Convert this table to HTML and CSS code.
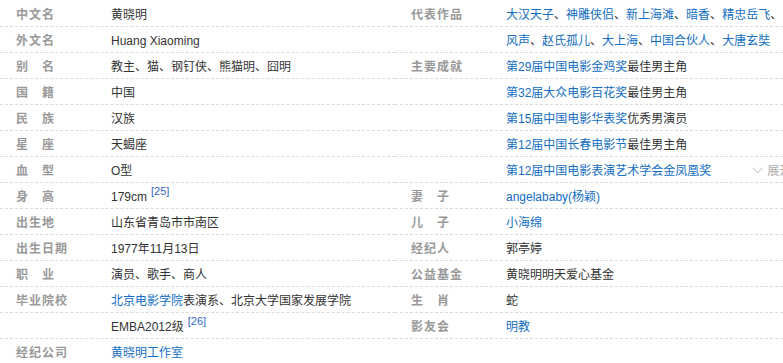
FILE: index.html
```html
<!DOCTYPE html>
<html lang="zh-CN">
<head>
<meta charset="utf-8">
<title>黄晓明 基本信息</title>
<link rel="stylesheet" href="styles.css">
</head>
<body>
<div class="info">
  <div class="col col-left">
    <div class="row"><span class="label">中文名</span><span class="value">黄晓明</span></div>
    <div class="row"><span class="label">外文名</span><span class="value">Huang Xiaoming</span></div>
    <div class="row"><span class="label">别　名</span><span class="value">教主、猫、钢钉侠、熊猫明、囧明</span></div>
    <div class="row"><span class="label">国　籍</span><span class="value">中国</span></div>
    <div class="row"><span class="label">民　族</span><span class="value">汉族</span></div>
    <div class="row"><span class="label">星　座</span><span class="value">天蝎座</span></div>
    <div class="row"><span class="label">血　型</span><span class="value">O型</span></div>
    <div class="row"><span class="label">身　高</span><span class="value">179cm<sup class="ref">[25]</sup></span></div>
    <div class="row"><span class="label">出生地</span><span class="value">山东省青岛市市南区</span></div>
    <div class="row"><span class="label">出生日期</span><span class="value">1977年11月13日</span></div>
    <div class="row"><span class="label">职　业</span><span class="value">演员、歌手、商人</span></div>
    <div class="row"><span class="label">毕业院校</span><span class="value"><a class="link" href="#">北京电影学院</a>表演系、北京大学国家发展学院</span></div>
    <div class="row"><span class="label"></span><span class="value">EMBA2012级<sup class="ref">[26]</sup></span></div>
    <div class="row row-last"><span class="label">经纪公司</span><span class="value"><a class="link" href="#">黄晓明工作室</a></span></div>
  </div>
  <div class="col col-right">
    <div class="row"><span class="label">代表作品</span><span class="value"><a class="link" href="#">大汉天子</a>、<a class="link" href="#">神雕侠侣</a>、<a class="link" href="#">新上海滩</a>、<a class="link" href="#">暗香</a>、<a class="link" href="#">精忠岳飞</a>、</span></div>
    <div class="row"><span class="label"></span><span class="value"><a class="link" href="#">风声</a>、<a class="link" href="#">赵氏孤儿</a>、<a class="link" href="#">大上海</a>、<a class="link" href="#">中国合伙人</a>、<a class="link" href="#">大唐玄奘</a></span></div>
    <div class="row"><span class="label">主要成就</span><span class="value"><a class="link" href="#">第29届中国电影金鸡奖</a>最佳男主角</span></div>
    <div class="row"><span class="label"></span><span class="value"><a class="link" href="#">第32届大众电影百花奖</a>最佳男主角</span></div>
    <div class="row"><span class="label"></span><span class="value"><a class="link" href="#">第15届中国电影华表奖</a>优秀男演员</span></div>
    <div class="row"><span class="label"></span><span class="value"><a class="link" href="#">第12届中国长春电影节</a>最佳男主角</span></div>
    <div class="row"><span class="label"></span><span class="value"><a class="link" href="#">第12届中国电影表演艺术学会金凤凰奖</a><span class="expand"><svg class="chev" width="11" height="7" viewBox="0 0 11 7"><path d="M0.5 0.8 L5.5 5.8 L10.5 0.8" fill="none" stroke="#b4b4b4" stroke-width="1"/></svg>展开</span></span></div>
    <div class="row"><span class="label">妻　子</span><span class="value"><a class="link" href="#">angelababy(杨颖)</a></span></div>
    <div class="row"><span class="label">儿　子</span><span class="value"><a class="link" href="#">小海绵</a></span></div>
    <div class="row"><span class="label">经纪人</span><span class="value">郭亭婷</span></div>
    <div class="row"><span class="label">公益基金</span><span class="value">黄晓明明天爱心基金</span></div>
    <div class="row"><span class="label">生　肖</span><span class="value">蛇</span></div>
    <div class="row"><span class="label">影友会</span><span class="value"><a class="link" href="#">明教</a></span></div>
  </div>
</div>
</body>
</html>
```

FILE: styles.css
```css
html, body {
  margin: 0;
  padding: 0;
  background: #fff;
}

body {
  padding-top: 1px;
  font-family: "Liberation Sans", "Noto Sans CJK SC", sans-serif;
  font-size: 12px;
  color: #333;
  overflow: hidden;
}

.info {
  display: flex;
  width: 783px;
  overflow: hidden;
}

.col-left {
  flex: 0 0 395px;
}

.col-right {
  flex: 1 1 auto;
  min-width: 0;
}

.row {
  display: flex;
  height: 26px;
  box-sizing: border-box;
  padding-top: 4px;
  line-height: 21px;
  border-bottom: 1px dashed #dcdcdc;
  white-space: nowrap;
}

.row-last {
  border-bottom: none;
}

.label {
  flex: 0 0 111px;
  box-sizing: border-box;
  padding-left: 16px;
  font-weight: bold;
  color: #999;
  letter-spacing: 1px;
}

.value {
  flex: 1 1 auto;
  min-width: 0;
}

.link {
  color: #136ec2;
  text-decoration: none;
}

.ref {
  margin-left: 4px;
  font-size: 11px;
  line-height: 0;
  color: #3366cc;
  vertical-align: 6px;
}

.expand {
  margin-left: 41px;
  color: #aaa;
}

.chev {
  margin-right: 4px;
  vertical-align: 1px;
}
```
